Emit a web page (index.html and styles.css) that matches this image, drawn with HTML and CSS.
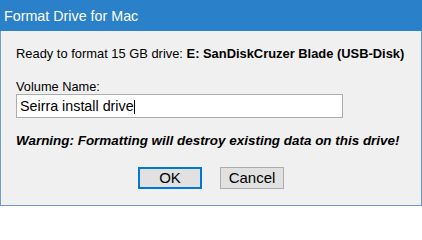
FILE: index.html
```html
<!DOCTYPE html>
<html lang="en">
<head>
<meta charset="utf-8">
<title>Format Drive for Mac</title>
<link rel="stylesheet" href="styles.css">
</head>
<body>
<div class="window">
  <div class="titlebar">Format Drive for Mac</div>
  <div class="content">
    <div class="ready">Ready to format 15 GB drive: <b>E: SanDiskCruzer Blade (USB-Disk)</b></div>
    <div class="label">Volume Name:</div>
    <div class="field"><span class="value">Seirra install drive</span><span class="caret"></span></div>
    <div class="warning">Warning: Formatting will destroy existing data on this drive!</div>
    <div class="buttons">
      <div class="btn btn-default">OK</div>
      <div class="btn">Cancel</div>
    </div>
  </div>
</div>
</body>
</html>
```
FILE: styles.css
```css
html, body {
  margin: 0;
  padding: 0;
  background: #ffffff;
}
body {
  font-family: "Liberation Sans", Arial, sans-serif;
  color: #000;
}
.window {
  width: 420px;
  height: 205px;
  border: 1px solid #6f9cc6;
  border-top: none;
  background: #f0f0f0;
  display: flex;
  flex-direction: column;
}
.titlebar {
  height: 31px;
  background: #2b80ca;
  color: #fff;
  font-size: 14.3px;
  line-height: 32px;
  padding-left: 4px;
  margin: 0 -1px;
}
.content {
  padding-left: 15px;
  display: flex;
  flex-direction: column;
}
.ready {
  margin-top: 15px;
  font-size: 12.9px;
  line-height: 15px;
}
.ready b {
  font-weight: bold;
}
.label {
  margin-top: 18px;
  font-size: 12.8px;
  line-height: 15px;
}
.field {
  height: 21px;
  width: 322px;
  border: 1px solid #adadad;
  background: #fff;
  padding: 1px 0 0 3px;
  display: flex;
  align-items: center;
}
.value {
  font-size: 14.3px;
  line-height: 21px;
}
.caret {
  display: inline-block;
  width: 1px;
  height: 14px;
  margin-left: 0;
  background: #000;
}
.warning {
  margin-top: 15px;
  font-size: 13.45px;
  line-height: 15px;
  font-weight: bold;
  font-style: italic;
}
.buttons {
  margin-top: 19px;
  display: flex;
  justify-content: center;
  gap: 18px;
  margin-left: -15px;
}
.btn {
  width: 62px;
  height: 20px;
  border: 1px solid #adadad;
  background: #e1e1e1;
  font-size: 15px;
  line-height: 20px;
  text-align: center;
}
.btn-default {
  width: 60px;
  height: 18px;
  line-height: 18px;
  border: 2px solid #0078d7;
}
```
